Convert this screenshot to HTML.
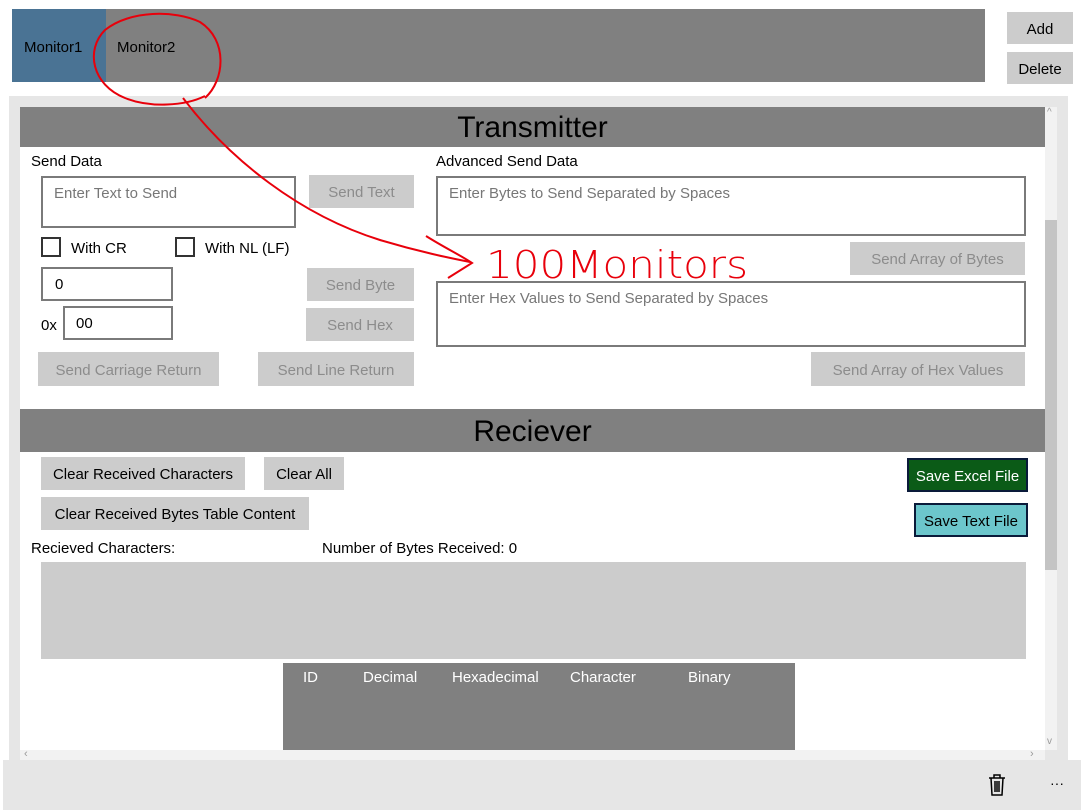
<!DOCTYPE html>
<html><head><meta charset="utf-8"><style>
*{margin:0;padding:0;box-sizing:border-box}
body{width:1081px;height:810px;background:#fff;position:relative;overflow:hidden;font-family:"Liberation Sans",sans-serif;font-size:15px;color:#000}
.a{position:absolute}
.btn{position:absolute;background:#ccc;color:#8c8c8c;display:flex;align-items:center;justify-content:center;font-size:15px;padding-top:2px}
.btn.d{color:#000}
.tb{position:absolute;border:2px solid #7a7a7a;background:#fff;color:#777;padding:7px 11px;font-size:15px}
.hdr{position:absolute;left:20px;width:1025px;background:#808080;text-align:center;font-size:30px;color:#000}
.cb{position:absolute;width:20px;height:20px;border:2px solid #333;background:#fff}
</style></head><body>
<div class="a" style="left:12px;top:9px;width:973px;height:73px;background:#808080"></div>
<div class="a" style="left:12px;top:9px;width:94px;height:73px;background:#4a7394"></div>
<div class="a" style="left:24px;top:39px">Monitor1</div>
<div class="a" style="left:117px;top:39px">Monitor2</div>
<div class="btn d" style="left:1007px;top:12px;width:66px;height:32px">Add</div>
<div class="btn d" style="left:1007px;top:52px;width:66px;height:32px">Delete</div>

<div class="a" style="left:9px;top:96px;width:1059px;height:664px;background:#e6e6e6"></div>
<div class="a" style="left:20px;top:107px;width:1025px;height:643px;background:#fff"></div>
<div class="a" style="left:1045px;top:107px;width:12px;height:643px;background:#f2f2f2"></div>
<div class="a" style="left:1045px;top:220px;width:12px;height:350px;background:#c4c4c4"></div>
<div class="a" style="left:1047px;top:107px;font-size:10px;color:#999">^</div>
<div class="a" style="left:1047px;top:736px;font-size:10px;color:#999">v</div>
<div class="a" style="left:20px;top:750px;width:1025px;height:10px;background:#f2f2f2"></div>
<div class="a" style="left:24px;top:748px;font-size:11px;color:#999">‹</div>
<div class="a" style="left:1030px;top:748px;font-size:11px;color:#999">›</div>

<div class="hdr" style="top:107px;height:40px;line-height:42px">Transmitter</div>
<div class="a" style="left:31px;top:153px">Send Data</div>
<div class="a" style="left:436px;top:153px">Advanced Send Data</div>
<div class="tb" style="left:41px;top:176px;width:255px;height:52px">Enter Text to Send</div>
<div class="btn" style="left:309px;top:175px;width:105px;height:33px">Send Text</div>
<div class="tb" style="left:436px;top:176px;width:590px;height:60px">Enter Bytes to Send Separated by Spaces</div>
<div class="cb" style="left:41px;top:237px"></div><div class="a" style="left:71px;top:240px">With CR</div>
<div class="cb" style="left:175px;top:237px"></div><div class="a" style="left:205px;top:240px">With NL (LF)</div>
<div class="btn" style="left:850px;top:242px;width:175px;height:33px">Send Array of Bytes</div>
<div class="tb" style="left:41px;top:267px;width:132px;height:34px;color:#000;padding-left:12px">0</div>
<div class="btn" style="left:307px;top:268px;width:107px;height:33px">Send Byte</div>
<div class="a" style="left:41px;top:317px">0x</div>
<div class="tb" style="left:63px;top:306px;width:110px;height:34px;color:#000;padding-left:11px">00</div>
<div class="btn" style="left:306px;top:308px;width:108px;height:33px">Send Hex</div>
<div class="tb" style="left:436px;top:281px;width:590px;height:66px">Enter Hex Values to Send Separated by Spaces</div>
<div class="btn" style="left:38px;top:352px;width:181px;height:34px">Send Carriage Return</div>
<div class="btn" style="left:258px;top:352px;width:156px;height:34px">Send Line Return</div>
<div class="btn" style="left:811px;top:352px;width:214px;height:34px">Send Array of Hex Values</div>

<div class="hdr" style="top:409px;height:43px;line-height:46px">Reciever</div>
<div class="btn d" style="left:41px;top:457px;width:204px;height:33px">Clear Received Characters</div>
<div class="btn d" style="left:264px;top:457px;width:80px;height:33px">Clear All</div>
<div class="btn d" style="left:41px;top:497px;width:268px;height:33px">Clear Received Bytes Table Content</div>
<div class="btn" style="left:907px;top:458px;width:121px;height:34px;background:#0b5b17;color:#fff;border:2px solid #0a1a3a">Save Excel File</div>
<div class="btn" style="left:914px;top:503px;width:114px;height:34px;background:#6cc6cc;color:#000;border:2px solid #0a1a3a">Save Text File</div>
<div class="a" style="left:31px;top:540px">Recieved Characters:</div>
<div class="a" style="left:322px;top:540px">Number of Bytes Received: 0</div>
<div class="a" style="left:41px;top:562px;width:985px;height:97px;background:#cccccc"></div>
<div class="a" style="left:283px;top:663px;width:512px;height:87px;background:#808080"></div>
<div class="a" style="left:303px;top:669px;color:#fff">ID</div>
<div class="a" style="left:363px;top:669px;color:#fff">Decimal</div>
<div class="a" style="left:452px;top:669px;color:#fff">Hexadecimal</div>
<div class="a" style="left:570px;top:669px;color:#fff">Character</div>
<div class="a" style="left:688px;top:669px;color:#fff">Binary</div>

<div class="a" style="left:3px;top:760px;width:1078px;height:50px;background:#e6e6e6"></div>
<svg class="a" style="left:986px;top:773px" width="22" height="24" viewBox="0 0 22 24" fill="none" stroke="#000" stroke-width="1.5"><path d="M3 5h16M8 5V2h6v3M5 5l1 17h10l1-17M9 8v11M11 8v11M13 8v11"/></svg>
<div class="a" style="left:1050px;top:775px;font-size:14px">···</div>

<svg class="a" style="left:0;top:0" width="1081" height="810" fill="none" stroke="#e8000b" stroke-width="2">
<path d="M205 98C225 80 228 40 200 22C175 10 130 10 105 30C85 50 92 85 125 98C150 108 185 106 205 96"/>
<path d="M183 98C230 160 300 215 380 240C420 252 450 258 470 262"/>
<path d="M426 236C445 248 462 256 472 263L448 278"/>
<text x="486" y="278" font-family="DejaVu Sans,sans-serif" font-size="38" fill="#e8000b" stroke="none" font-weight="200" textLength="262" lengthAdjust="spacingAndGlyphs">100Monitors</text>
</svg>
</body></html>
